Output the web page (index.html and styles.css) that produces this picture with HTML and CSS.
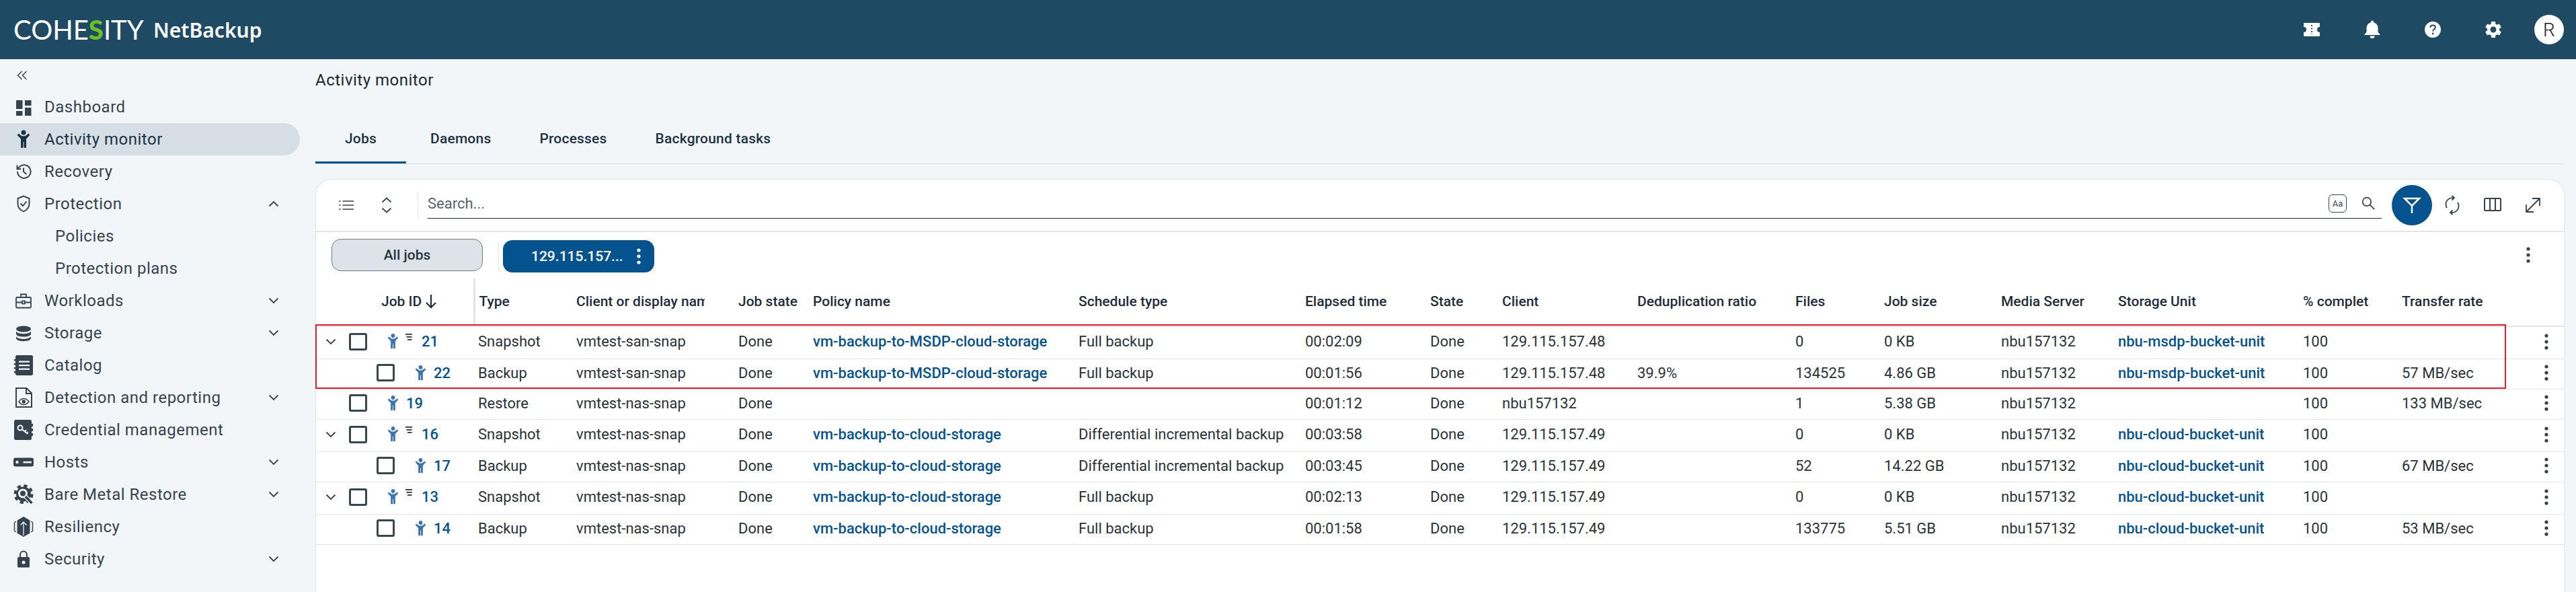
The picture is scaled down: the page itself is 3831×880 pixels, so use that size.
FILE: index.html
```html
<!DOCTYPE html>
<html lang="en">
<head>
    <meta charset="UTF-8">
    <title>Activity monitor - NetBackup</title>
    <link rel="stylesheet" href="styles.css">
</head>
<body>
    <!-- shared icons -->
    <svg class="sprite" xmlns="http://www.w3.org/2000/svg">
        <symbol id="i-person" viewBox="0 0 16 22">
            <circle cx="8" cy="2.900" r="2.800"/>
            <path d="M.5 6 2 4.200 6 7.200h4l4-3L15.500 6 11.200 10.500v10a1.600 1.600 0 0 1-2.800 0v-6.300h-.8v6.300a1.600 1.600 0 0 1-2.800 0v-10z"/>
        </symbol>
        <symbol id="i-kebab" viewBox="0 0 8 24">
            <circle cx="4" cy="3" r="2.600"/><circle cx="4" cy="12" r="2.600"/><circle cx="4" cy="21" r="2.600"/>
        </symbol>
        <symbol id="i-down" viewBox="0 0 16 10">
            <path d="M1.500 1.500 8 8l6.500-6.500" fill="none" stroke="currentColor" stroke-width="1.800"/>
        </symbol>
        <symbol id="i-up" viewBox="0 0 16 10">
            <path d="M1.500 8.500 8 2l6.500 6.500" fill="none" stroke="currentColor" stroke-width="1.800"/>
        </symbol>
        <symbol id="i-badge" viewBox="0 0 12 10">
            <path d="M1 0h10v1.800H1zM2.500 4h8v1.800h-8zM4 8h6.500v1.800H4z"/>
        </symbol>
    </svg>

    <header class="topbar">
        <div class="brand">
            <span class="logo">COHE<b>S</b>ITY</span>
            <span class="product">NetBackup</span>
        </div>
        <div class="topbar-actions">
            <span class="top-btn">
                <svg width="30" height="30" viewBox="0 0 30 30"><path d="M4 5h22a1 1 0 0 1 1 1v5a4 4 0 0 0 0 8v5a1 1 0 0 1-1 1H4a1 1 0 0 1-1-1v-5a4 4 0 0 0 0-8V6a1 1 0 0 1 1-1z" fill="#fff"/><path d="M15 8v14" stroke="#1f4a64" stroke-width="1.800" stroke-dasharray="2 2.500"/></svg>
            </span>
            <span class="top-btn">
                <svg width="30" height="30" viewBox="0 0 30 30" fill="#fff"><path d="M15 1.500a2 2 0 0 1 2 2v.8c4 1 6.500 4.500 6.500 8.700v5.500l3.500 4.500H3l3.500-4.500V13c0-4.200 2.500-7.700 6.500-8.700v-.8a2 2 0 0 1 2-2zM11.500 24.500h7a3.500 3.500 0 0 1-7 0z"/></svg>
            </span>
            <span class="top-btn">
                <svg width="30" height="30" viewBox="0 0 30 30"><circle cx="15" cy="15" r="12" fill="#fff"/><path d="M11.300 11.800c.2-2 1.700-3.200 3.800-3.200s3.700 1.200 3.700 3.100c0 2.900-3.600 2.800-3.600 5.800" fill="none" stroke="#1f4a64" stroke-width="2"/><circle cx="15.200" cy="21" r="1.400" fill="#1f4a64"/></svg>
            </span>
            <span class="top-btn">
                <svg width="30" height="30" viewBox="0 0 24 24" fill="#fff"><path d="M19.140 12.940c.04-.3.06-.61.06-.94 0-.32-.02-.64-.07-.94l2.030-1.580a.49.49 0 0 0 .12-.61l-1.920-3.320a.488.488 0 0 0-.59-.22l-2.390.96c-.5-.38-1.030-.7-1.620-.94l-.36-2.540a.484.484 0 0 0-.48-.41h-3.840c-.24 0-.43.17-.47.41l-.36 2.540c-.59.24-1.130.57-1.620.94l-2.390-.96c-.22-.08-.47 0-.59.22L2.740 8.870c-.12.21-.08.47.12.61l2.030 1.580c-.05.3-.09.63-.09.94s.02.64.07.94l-2.030 1.580a.49.49 0 0 0-.12.61l1.920 3.320c.12.22.37.29.59.22l2.390-.96c.5.38 1.030.7 1.620.94l.36 2.540c.05.24.24.41.48.41h3.840c.24 0 .44-.17.47-.41l.36-2.540c.59-.24 1.130-.56 1.620-.94l2.390.96c.22.08.47 0 .59-.22l1.920-3.320c.12-.22.07-.47-.12-.61l-2.010-1.580zM12 15.600c-1.980 0-3.600-1.620-3.600-3.600s1.620-3.600 3.600-3.600 3.600 1.620 3.600 3.600-1.620 3.600-3.600 3.600z"/></svg>
            </span>
            <span class="avatar">R</span>
        </div>
    </header>

    <div class="shell">
        <nav class="sidebar">
            <div class="collapse-row">
                <svg width="16" height="14" viewBox="0 0 16 14" fill="none" stroke="currentColor" stroke-width="1.500"><path d="M7.500 1 1.500 7l6 6M14.500 1l-6 6 6 6"/></svg>
            </div>
            <a class="nav-item">
                <svg class="nav-icon" viewBox="0 0 30 30" fill="currentColor"><path d="M4 5h9.500v13H4zM17 5h9.500v8H17zM4 21h9.500v7H4zM17 16h9.500v12H17z"/></svg>
                <span>Dashboard</span>
            </a>
            <a class="nav-item active">
                <svg class="nav-icon" viewBox="0 0 30 30" fill="currentColor"><use href="#i-person" x="5" y="1" width="20" height="28"/></svg>
                <span>Activity monitor</span>
            </a>
            <a class="nav-item">
                <svg class="nav-icon" viewBox="0 0 30 30" fill="none" stroke="currentColor" stroke-width="2"><path d="M6 15a9.800 9.800 0 1 0 3-7l-3.500 3.200M5.500 5.500v5.700h5.700M15 9.500V15l4.500 4"/></svg>
                <span>Recovery</span>
            </a>
            <a class="nav-item">
                <svg class="nav-icon" viewBox="0 0 30 30" fill="none" stroke="currentColor" stroke-width="1.900"><path d="M15 3.500 6.500 7v8c0 5 3.200 9 8.500 11.500 5.300-2.500 8.500-6.500 8.500-11.500V7zM10.500 14.500l3.500 3.500 5.500-6.500"/></svg>
                <span>Protection</span>
                <svg class="nav-caret"><use href="#i-up"/></svg>
            </a>
            <a class="nav-item sub"><span>Policies</span></a>
            <a class="nav-item sub"><span>Protection plans</span></a>
            <a class="nav-item">
                <svg class="nav-icon" viewBox="0 0 30 30" fill="none" stroke="currentColor" stroke-width="1.800"><rect x="4" y="10" width="22" height="15.500" rx="1.500"/><path d="M11 10V5.500h8V10M4 17.500h9M17 17.500h9"/><rect x="13" y="15.500" width="4" height="4"/></svg>
                <span>Workloads</span>
                <svg class="nav-caret"><use href="#i-down"/></svg>
            </a>
            <a class="nav-item">
                <svg class="nav-icon" viewBox="0 0 30 30" fill="currentColor"><ellipse cx="15" cy="9" rx="11" ry="4.500"/><path d="M4 11.800c0 2.500 5 4.400 11 4.400s11-1.900 11-4.400v4.400c0 2.500-5 4.400-11 4.400S4 18.700 4 16.200zM4 19.600c0 2.500 5 4.400 11 4.400s11-1.900 11-4.400v3.200c0 2.500-5 4.400-11 4.400S4 25.300 4 22.800z"/></svg>
                <span>Storage</span>
                <svg class="nav-caret"><use href="#i-down"/></svg>
            </a>
            <a class="nav-item">
                <svg class="nav-icon" viewBox="0 0 30 30" fill="currentColor"><rect x="3" y="0" width="26" height="30" rx="2.500"/><path d="M.8 6h3v2.500h-3zM.8 12h3v2.500h-3zM.8 18h3v2.500h-3zM.8 24h3v2.500h-3z"/><path d="M8 8.500h16v2.300H8zM8 14h16v2.300H8zM8 19.500h16v2.300H8z" fill="#f2f6f8"/></svg>
                <span>Catalog</span>
            </a>
            <a class="nav-item">
                <svg class="nav-icon" viewBox="0 0 30 30" fill="none" stroke="currentColor" stroke-width="2"><path d="M4 1h15.500L27 8.500V29H4zM19 1v8h8"/><path d="M8 21c2-3 4.300-4.500 7.300-4.500s5.500 1.500 7.700 4.500c-2.200 3-4.700 4.500-7.700 4.500S10 24 8 21z" stroke-width="1.500"/><circle cx="15.300" cy="21" r="2.700" fill="currentColor" stroke="none"/></svg>
                <span>Detection and reporting</span>
                <svg class="nav-caret"><use href="#i-down"/></svg>
            </a>
            <a class="nav-item">
                <svg class="nav-icon" viewBox="0 0 30 30" fill="currentColor"><rect x="1" y="0" width="26" height="30" rx="2.500"/><path d="M26 6h3v4h-3zM26 13h3v4h-3zM26 20h3v4h-3z"/><g fill="none" stroke="#f2f6f8" stroke-width="2"><circle cx="10" cy="12" r="3.500"/><path d="M12.800 14.500 21.500 21M16.500 17.500l2.500-2.500M19.500 20l2-2"/></g></svg>
                <span>Credential management</span>
            </a>
            <a class="nav-item">
                <svg class="nav-icon" viewBox="0 0 30 30" fill="currentColor"><rect x="0" y="8.500" width="30" height="13" rx="3"/><circle cx="5.500" cy="15" r="2.200" fill="#f2f6f8"/><rect x="14.500" y="13.800" width="12.500" height="2.600" fill="#f2f6f8"/></svg>
                <span>Hosts</span>
                <svg class="nav-caret"><use href="#i-down"/></svg>
            </a>
            <a class="nav-item">
                <svg class="nav-icon" viewBox="0 0 30 30"><circle cx="15" cy="14.500" r="12" fill="none" stroke="currentColor" stroke-width="5" stroke-dasharray="5 4.420"/><circle cx="15" cy="14.500" r="11" fill="currentColor"/><circle cx="14" cy="13.500" r="7" fill="#f2f6f8"/><circle cx="14" cy="13.500" r="4" fill="currentColor"/><path d="M18 18l8.500 9" stroke="#f2f6f8" stroke-width="6"/><path d="M18 18l9.500 10" stroke="currentColor" stroke-width="3.500"/></svg>
                <span>Bare Metal Restore</span>
                <svg class="nav-caret"><use href="#i-down"/></svg>
            </a>
            <a class="nav-item">
                <svg class="nav-icon" viewBox="0 0 30 30"><path d="M15 0l9.500 5.500v19L15 30l-9.500-5.500v-19z" fill="currentColor"/><path d="M3.500 7 1.500 9v12l2 2M26.500 7l2 2v12l-2 2" fill="none" stroke="currentColor" stroke-width="1.500"/><path d="M15 28V8M10.500 12.500 15 8l4.500 4.500" fill="none" stroke="#f2f6f8" stroke-width="1.300"/></svg>
                <span>Resiliency</span>
            </a>
            <a class="nav-item">
                <svg class="nav-icon" viewBox="0 0 30 30"><path d="M10 12.500V8.500a5 5 0 0 1 10 0v4" fill="none" stroke="currentColor" stroke-width="2"/><rect x="6" y="12" width="18" height="15.500" rx="1.500" fill="currentColor"/><circle cx="15" cy="20" r="2.500" fill="#f2f6f8"/></svg>
                <span>Security</span>
                <svg class="nav-caret"><use href="#i-down"/></svg>
            </a>
        </nav>

        <main class="content">
            <h1 class="page-title">Activity monitor</h1>

            <div class="tabs">
                <a class="tab active">Jobs</a>
                <a class="tab">Daemons</a>
                <a class="tab">Processes</a>
                <a class="tab">Background tasks</a>
            </div>

            <section class="card">
                <div class="toolbar">
                    <span class="tool-btn">
                        <svg width="24" height="24" viewBox="0 0 24 24" fill="none" stroke="currentColor" stroke-width="1.700"><path d="M6.500 6H23M6.500 12H23M6.500 18H23M1 6h2.500M1 12h2.500M1 18h2.500"/></svg>
                    </span>
                    <span class="tool-btn">
                        <svg width="18" height="24" viewBox="0 0 18 24" fill="none" stroke="currentColor" stroke-width="1.800"><path d="M2.500 7.500 9 1.500l6.500 6M2.500 16.500 9 22.500l6.500-6"/></svg>
                    </span>
                    <span class="tool-divider"></span>
                    <div class="search">
                        <span class="search-text">Search...</span>
                        <span class="case-btn">Aa</span>
                        <svg class="search-icon" width="20" height="20" viewBox="0 0 24 24" fill="none" stroke="currentColor" stroke-width="2.100"><circle cx="9.500" cy="9.500" r="7.500"/><path d="M15 15l8 8"/></svg>
                    </div>
                    <span class="tool-btn filter">
                        <svg width="28" height="28" viewBox="0 0 28 28" fill="none" stroke="#fff" stroke-width="2.500"><path d="M3 4h22l-11 11zM14 15v11"/></svg>
                    </span>
                    <span class="tool-btn">
                        <svg width="24" height="30" viewBox="0 0 24 30" fill="none" stroke="currentColor" stroke-width="1.800"><path d="M14 4c-6.500-.5-11.500 3.500-11.500 10 0 2 .5 3.500 1.500 5M11.500 1 15 4l-3.500 3.500M10 26c6.500.5 11.500-3.500 11.500-10 0-2-.5-3.500-1.500-5M12.500 29 9 26l3.500-3.500"/></svg>
                    </span>
                    <span class="tool-btn">
                        <svg width="26" height="22" viewBox="0 0 26 22" fill="none" stroke="currentColor" stroke-width="2"><rect x="1" y="1" width="24" height="18" rx="1"/><path d="M9 1v18M17 1v18"/></svg>
                    </span>
                    <span class="tool-btn">
                        <svg width="24" height="24" viewBox="0 0 24 24" fill="none" stroke="currentColor" stroke-width="1.800"><path d="M22 2 2 22M11 2h11v11M13 22H2V11"/></svg>
                    </span>
                </div>

                <div class="chips">
                    <span class="chip chip-all">All jobs</span>
                    <span class="chip-divider"></span>
                    <span class="chip chip-saved">
                        <span class="chip-label">129.115.157...</span>
                        <svg class="chip-menu"><use href="#i-kebab"/></svg>
                    </span>
                    <svg class="chips-menu"><use href="#i-kebab"/></svg>
                </div>

                <div class="table-wrap">
                    <table class="jobs">
                        <colgroup>
                            <col class="c-job"><col class="c-type"><col class="c-name"><col class="c-jobstate"><col class="c-policy">
                            <col class="c-schedule"><col class="c-elapsed"><col class="c-state"><col class="c-client"><col class="c-dedup">
                            <col class="c-files"><col class="c-size"><col class="c-media"><col class="c-storage"><col class="c-percent">
                            <col class="c-rate"><col class="c-actions">
                        </colgroup>
                        <thead>
                            <tr>
                                <th class="th-job"><span class="th-job-inner">Job ID<svg width="18" height="24" viewBox="0 0 18 24" fill="none" stroke="currentColor" stroke-width="2.200"><path d="M9 2v19M2 14l7 7 7-7"/></svg></span></th>
                                <th>Type</th>
                                <th><span class="clip clip-name">Client or display name</span></th>
                                <th>Job state</th>
                                <th>Policy name</th>
                                <th>Schedule type</th>
                                <th>Elapsed time</th>
                                <th>State</th>
                                <th>Client</th>
                                <th>Deduplication ratio</th>
                                <th>Files</th>
                                <th>Job size</th>
                                <th>Media Server</th>
                                <th>Storage Unit</th>
                                <th><span class="clip clip-percent">% complete</span></th>
                                <th>Transfer rate</th>
                                <th></th>
                            </tr>
                        </thead>
                        <tbody>
                            <tr class="tall">
                                <td><div class="job-cell"><svg class="expander"><use href="#i-down"/></svg><span class="check"></span><svg class="person"><use href="#i-person"/></svg><svg class="badge"><use href="#i-badge"/></svg><a class="job-id">21</a></div></td>
                                <td>Snapshot</td><td>vmtest-san-snap</td><td>Done</td>
                                <td><a class="link">vm-backup-to-MSDP-cloud-storage</a></td>
                                <td>Full backup</td><td>00:02:09</td><td>Done</td><td>129.115.157.48</td><td></td>
                                <td>0</td><td>0 KB</td><td>nbu157132</td>
                                <td><a class="link">nbu-msdp-bucket-unit</a></td>
                                <td>100</td><td></td>
                                <td class="actions"><svg class="row-menu"><use href="#i-kebab"/></svg></td>
                            </tr>
                            <tr>
                                <td><div class="job-cell child"><span class="check"></span><svg class="person"><use href="#i-person"/></svg><a class="job-id">22</a></div></td>
                                <td>Backup</td><td>vmtest-san-snap</td><td>Done</td>
                                <td><a class="link">vm-backup-to-MSDP-cloud-storage</a></td>
                                <td>Full backup</td><td>00:01:56</td><td>Done</td><td>129.115.157.48</td><td>39.9%</td>
                                <td>134525</td><td>4.86 GB</td><td>nbu157132</td>
                                <td><a class="link">nbu-msdp-bucket-unit</a></td>
                                <td>100</td><td>57 MB/sec</td>
                                <td class="actions"><svg class="row-menu"><use href="#i-kebab"/></svg></td>
                            </tr>
                            <tr>
                                <td><div class="job-cell plain"><span class="check"></span><svg class="person"><use href="#i-person"/></svg><a class="job-id">19</a></div></td>
                                <td>Restore</td><td>vmtest-nas-snap</td><td>Done</td>
                                <td></td>
                                <td></td><td>00:01:12</td><td>Done</td><td>nbu157132</td><td></td>
                                <td>1</td><td>5.38 GB</td><td>nbu157132</td>
                                <td></td>
                                <td>100</td><td>133 MB/sec</td>
                                <td class="actions"><svg class="row-menu"><use href="#i-kebab"/></svg></td>
                            </tr>
                            <tr class="tall">
                                <td><div class="job-cell"><svg class="expander"><use href="#i-down"/></svg><span class="check"></span><svg class="person"><use href="#i-person"/></svg><svg class="badge"><use href="#i-badge"/></svg><a class="job-id">16</a></div></td>
                                <td>Snapshot</td><td>vmtest-nas-snap</td><td>Done</td>
                                <td><a class="link">vm-backup-to-cloud-storage</a></td>
                                <td>Differential incremental backup</td><td>00:03:58</td><td>Done</td><td>129.115.157.49</td><td></td>
                                <td>0</td><td>0 KB</td><td>nbu157132</td>
                                <td><a class="link">nbu-cloud-bucket-unit</a></td>
                                <td>100</td><td></td>
                                <td class="actions"><svg class="row-menu"><use href="#i-kebab"/></svg></td>
                            </tr>
                            <tr>
                                <td><div class="job-cell child"><span class="check"></span><svg class="person"><use href="#i-person"/></svg><a class="job-id">17</a></div></td>
                                <td>Backup</td><td>vmtest-nas-snap</td><td>Done</td>
                                <td><a class="link">vm-backup-to-cloud-storage</a></td>
                                <td>Differential incremental backup</td><td>00:03:45</td><td>Done</td><td>129.115.157.49</td><td></td>
                                <td>52</td><td>14.22 GB</td><td>nbu157132</td>
                                <td><a class="link">nbu-cloud-bucket-unit</a></td>
                                <td>100</td><td>67 MB/sec</td>
                                <td class="actions"><svg class="row-menu"><use href="#i-kebab"/></svg></td>
                            </tr>
                            <tr class="tall">
                                <td><div class="job-cell"><svg class="expander"><use href="#i-down"/></svg><span class="check"></span><svg class="person"><use href="#i-person"/></svg><svg class="badge"><use href="#i-badge"/></svg><a class="job-id">13</a></div></td>
                                <td>Snapshot</td><td>vmtest-nas-snap</td><td>Done</td>
                                <td><a class="link">vm-backup-to-cloud-storage</a></td>
                                <td>Full backup</td><td>00:02:13</td><td>Done</td><td>129.115.157.49</td><td></td>
                                <td>0</td><td>0 KB</td><td>nbu157132</td>
                                <td><a class="link">nbu-cloud-bucket-unit</a></td>
                                <td>100</td><td></td>
                                <td class="actions"><svg class="row-menu"><use href="#i-kebab"/></svg></td>
                            </tr>
                            <tr>
                                <td><div class="job-cell child"><span class="check"></span><svg class="person"><use href="#i-person"/></svg><a class="job-id">14</a></div></td>
                                <td>Backup</td><td>vmtest-nas-snap</td><td>Done</td>
                                <td><a class="link">vm-backup-to-cloud-storage</a></td>
                                <td>Full backup</td><td>00:01:58</td><td>Done</td><td>129.115.157.49</td><td></td>
                                <td>133775</td><td>5.51 GB</td><td>nbu157132</td>
                                <td><a class="link">nbu-cloud-bucket-unit</a></td>
                                <td>100</td><td>53 MB/sec</td>
                                <td class="actions"><svg class="row-menu"><use href="#i-kebab"/></svg></td>
                            </tr>
                        </tbody>
                    </table>
                    <!-- annotation drawn over the first two rows -->
                    <div class="callout"></div>
                </div>
            </section>
        </main>
    </div>
</body>
</html>
```

FILE: styles.css
```css
* {
    margin: 0;
    padding: 0;
    box-sizing: border-box;
}

html, body {
    height: 100%;
    overflow: hidden;
}

body {
    font-family: Roboto, "Liberation Sans", sans-serif;
    background: #f2f6f8;
    color: #2b3238;
    display: flex;
    flex-direction: column;
}

.sprite {
    display: none;
}

/* top bar */
.topbar {
    height: 88px;
    flex: none;
    background: #1f4a64;
    display: flex;
    align-items: center;
    justify-content: space-between;
    padding: 0 18px 0 20px;
    color: #fff;
}

.brand {
    display: flex;
    align-items: center;
}

.logo {
    font-family: Lato, sans-serif;
    font-size: 40px;
    font-weight: 400;
    width: 208px;
}

.logo b {
    color: #6cc024;
    font-weight: 900;
}

.product {
    font-family: "Noto Sans", sans-serif;
    font-size: 30px;
    font-weight: 600;
}

.topbar-actions {
    display: flex;
    align-items: center;
}

.top-btn {
    width: 90px;
    display: flex;
    justify-content: center;
}

.avatar {
    width: 44px;
    height: 44px;
    margin-left: 16px;
    border-radius: 50%;
    background: #fff;
    color: #1b2026;
    font-size: 28px;
    font-weight: 300;
    display: flex;
    align-items: center;
    justify-content: center;
}

/* sidebar */
.shell {
    flex: 1;
    display: flex;
    min-height: 0;
}

.sidebar {
    width: 469px;
    flex: none;
    padding-right: 23px;
    color: #36434f;
}

.collapse-row {
    height: 47px;
    padding-left: 25px;
    display: flex;
    align-items: center;
}

.nav-item {
    height: 48px;
    display: flex;
    align-items: center;
    font-size: 24px;
    letter-spacing: 0.5px;
    padding-left: 20px;
    border-radius: 0 24px 24px 0;
}

.nav-item.active {
    background: #d6dfe6;
    color: #1c3244;
}

.nav-item.sub {
    padding-left: 82px;
}

.nav-icon {
    width: 30px;
    height: 30px;
    margin-right: 16px;
    flex: none;
}

.nav-caret {
    width: 16px;
    height: 10px;
    margin-left: auto;
    margin-right: 31px;
}

/* main area */
.content {
    flex: 1;
    min-width: 0;
    padding-right: 17px;
    display: flex;
    flex-direction: column;
}

.page-title {
    font-size: 24px;
    font-weight: 400;
    letter-spacing: 0.5px;
    color: #1d2730;
    height: 83px;
    line-height: 62px;
}

.tabs {
    display: flex;
    height: 73px;
    flex: none;
    border-bottom: 1px solid #dbe1e6;
}

.tab {
    padding: 0 36px;
    height: 72px;
    line-height: 70px;
    font-size: 21px;
    letter-spacing: 0.2px;
    font-weight: 500;
    color: #1c3244;
}

.tab.active {
    min-width: 135px;
    text-align: center;
    padding: 0;
    border-bottom: 3px solid #04538f;
}

.card {
    flex: 1;
    margin-top: 22px;
    background: #fff;
    border: 1px solid #e0e4e8;
    border-bottom: none;
    border-radius: 24px 24px 0 0;
    display: flex;
    flex-direction: column;
}

/* toolbar */
.toolbar {
    height: 78px;
    flex: none;
    display: flex;
    align-items: center;
    padding: 0 16px 0 15px;
    border-bottom: 2px solid #e4e7ea;
    color: #36434f;
}

.tool-btn {
    width: 60px;
    height: 60px;
    flex: none;
    display: flex;
    align-items: center;
    justify-content: center;
}

.tool-btn.filter {
    background: #04538f;
    border-radius: 50%;
}

.tool-divider {
    width: 1px;
    height: 40px;
    background: #dfe3e6;
    margin: 0 14px 0 16px;
}

.search {
    flex: 1;
    align-self: flex-start;
    height: 58px;
    margin: 0 15px 0 0;
    border-bottom: 1px solid #1f2d3a;
    display: flex;
    align-items: center;
    padding-top: 13px;
    font-size: 22px;
}

.search-text {
    flex: 1;
    color: #58636d;
}

.case-btn {
    width: 27px;
    height: 27px;
    border: 1px solid #36434f;
    border-radius: 6px;
    font-size: 13px;
    display: flex;
    align-items: center;
    justify-content: center;
    margin-right: 22px;
}

.search-icon {
    margin-right: 10px;
}

/* saved filter chips */
.chips {
    height: 69px;
    flex: none;
    display: flex;
    align-items: flex-start;
    padding: 10px 0 0 23px;
}

.chip {
    width: 225px;
    height: 48px;
    border-radius: 14px;
    font-size: 21px;
    display: flex;
    align-items: center;
}

.chip-all {
    background: #dde3e8;
    border: 1px solid #6b7c8c;
    justify-content: center;
    color: #26323c;
    font-weight: 500;
}

.chip-divider {
    width: 1px;
    height: 44px;
    margin: 5px 6px 0 23px;
    background: #e2e5e8;
}

.chip-saved {
    margin-top: 2px;
    background: #04538f;
    color: #fff;
    font-weight: 500;
    padding-left: 42px;
}

.chip-label {
    width: 156px;
}

.chip-menu {
    width: 8px;
    height: 24px;
    fill: #fff;
}

.chips-menu {
    width: 8px;
    height: 24px;
    margin: 12px 49px 0 auto;
    fill: #36434f;
}

/* jobs table */
.table-wrap {
    position: relative;
    flex: 1;
}

.jobs {
    width: 100%;
    table-layout: fixed;
    border-collapse: collapse;
    font-size: 22px;
}

.c-job { width: 235px; }
.c-type { width: 146px; }
.c-name { width: 241px; }
.c-jobstate { width: 111px; }
.c-policy { width: 395px; }
.c-schedule { width: 337px; }
.c-elapsed { width: 186px; }
.c-state { width: 107px; }
.c-client { width: 201px; }
.c-dedup { width: 235px; }
.c-files { width: 132px; }
.c-size { width: 174px; }
.c-media { width: 174px; }
.c-storage { width: 275px; }
.c-percent { width: 147px; }
.c-rate { width: 195px; }
.c-actions { width: 52px; }

.jobs th {
    height: 71px;
    padding: 0 0 3px 6px;
    text-align: left;
    font-size: 21px;
    font-weight: 500;
    color: #1f2d3a;
    white-space: nowrap;
    border-bottom: 2px solid #e2e4e6;
}

.jobs th.th-job {
    padding-left: 97px;
    border-right: 3px solid #e2e4e6;
}

.th-job-inner {
    display: flex;
    align-items: center;
    gap: 5px;
}

.clip {
    display: block;
    overflow: hidden;
}

.clip-name {
    width: 191px;
}

.clip-percent {
    width: 97px;
}

.jobs td {
    height: 45px;
    padding: 0 0 3px 6px;
    white-space: nowrap;
    color: #2b3238;
    border-bottom: 1px solid #e2e4e6;
}

.jobs tr.tall td {
    height: 48px;
}

.jobs td:first-child {
    padding-left: 0;
}

.link, .job-id {
    color: #04538f;
    font-weight: 500;
}

.job-cell {
    display: flex;
    align-items: center;
    height: 26px;
}

.job-cell.child {
    padding-left: 90px;
}

.job-cell.plain {
    padding-left: 49px;
}

.expander {
    width: 16px;
    height: 10px;
    margin: 0 19px 0 14px;
    color: #36434f;
}

.check {
    width: 27px;
    height: 26px;
    flex: none;
    border: 3px solid #37474f;
    border-radius: 3px;
}

.person {
    width: 17px;
    height: 23px;
    margin: 0 11px 0 30px;
    fill: #3d74b0;
}

.badge {
    width: 12px;
    height: 10px;
    margin: -14px 13px 0 -2px;
    fill: #2b3238;
}

.job-id {
    font-size: 22px;
}

.actions {
    padding-left: 22px !important;
}

.row-menu {
    width: 8px;
    height: 24px;
    display: block;
    fill: #36434f;
}

.callout {
    position: absolute;
    left: -1px;
    top: 68px;
    width: 3258px;
    height: 96px;
    border: 2px solid #ee1c25;
    pointer-events: none;
}
```
